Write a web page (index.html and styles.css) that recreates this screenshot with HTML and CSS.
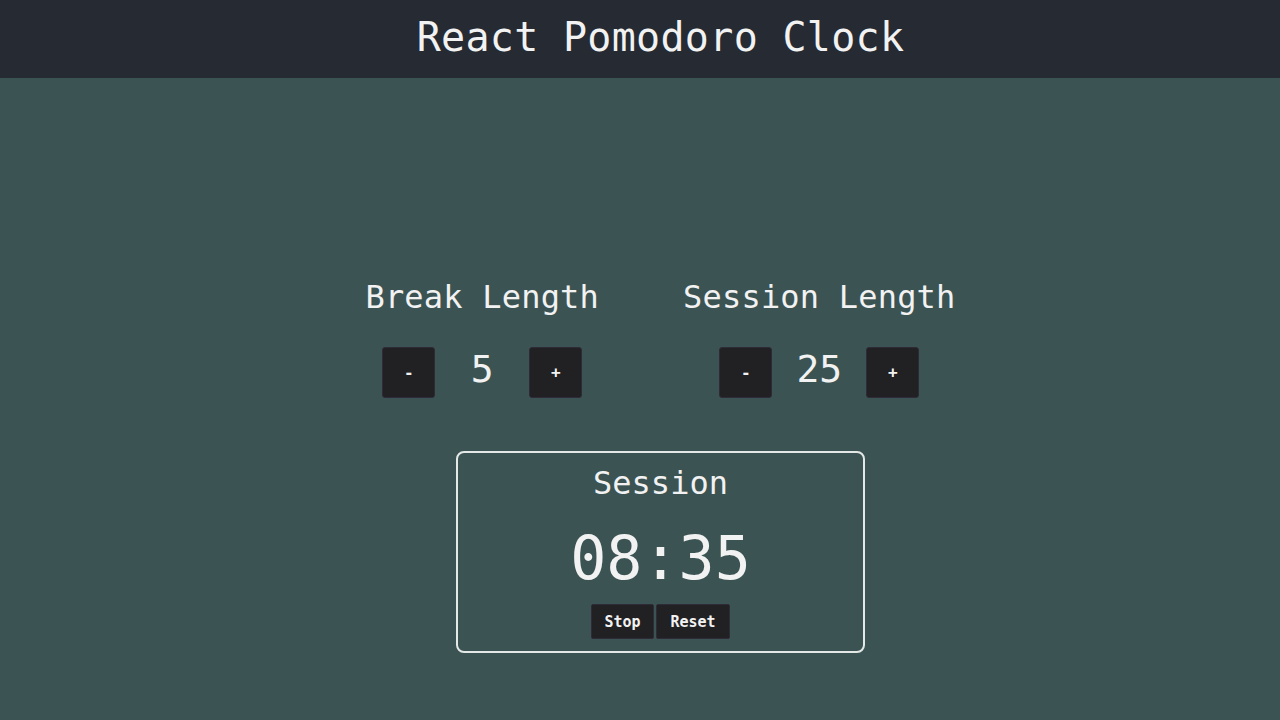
FILE: index.html
```html
<!DOCTYPE html>
<html lang="en">
<head>
<meta charset="utf-8">
<title>React Pomodoro Clock</title>
<link rel="stylesheet" href="styles.css">
</head>
<body>
  <header class="topbar">
    <h1 class="title">React Pomodoro Clock</h1>
  </header>
  <main class="app">
    <section class="settings">
      <div class="setting">
        <h2 class="setting-label">Break Length</h2>
        <div class="controls">
          <button class="ctrl">-</button>
          <span class="value">5</span>
          <button class="ctrl">+</button>
        </div>
      </div>
      <div class="setting">
        <h2 class="setting-label">Session Length</h2>
        <div class="controls">
          <button class="ctrl">-</button>
          <span class="value">25</span>
          <button class="ctrl">+</button>
        </div>
      </div>
    </section>
    <section class="timer">
      <div class="timer-label">Session</div>
      <div class="timer-time">08:35</div>
      <div class="timer-actions">
        <button class="action">Stop</button>
        <button class="action action-wide">Reset</button>
      </div>
    </section>
  </main>
</body>
</html>
```
FILE: styles.css
```css
* { box-sizing: border-box; }
html, body {
  margin: 0;
  height: 100%;
}
body {
  background: #3b5453;
  color: #f2f2f2;
  font-family: "DejaVu Sans Mono", "Liberation Mono", monospace;
}
.topbar {
  height: 78px;
  background: #262a32;
  display: flex;
  align-items: center;
  justify-content: center;
  padding-left: 41px;
  padding-bottom: 4px;
}
.title {
  margin: 0;
  font-size: 40px;
  font-weight: normal;
  line-height: 48px;
  letter-spacing: 0.3px;
}
.app {
  display: flex;
  flex-direction: column;
  align-items: center;
  padding-left: 41px;
  padding-top: 199px;
}
.settings {
  display: flex;
  gap: 84px;
  align-items: flex-start;
}
.setting {
  display: flex;
  flex-direction: column;
  align-items: center;
}
.setting-label {
  margin: 0;
  font-size: 32px;
  font-weight: normal;
  line-height: 40px;
  letter-spacing: 0.2px;
}
.controls {
  margin-top: 30px;
  display: flex;
  align-items: center;
}
.ctrl {
  width: 53px;
  height: 51px;
  background: #212023;
  border: 1px solid #2f2a38;
  border-radius: 3px;
  color: #f2f2f2;
  font-family: "DejaVu Sans Mono", monospace;
  font-size: 16px;
  font-weight: bold;
  padding: 0;
}
.value {
  width: 94px;
  text-align: center;
  font-size: 38px;
  line-height: 44px;
  margin-top: -8px;
}
.timer {
  margin-top: 53px;
  width: 409px;
  height: 202px;
  border: 2px solid #e4e8e6;
  border-radius: 8px;
  display: flex;
  flex-direction: column;
  align-items: center;
  padding-top: 10px;
}
.timer-label {
  font-size: 32px;
  line-height: 40px;
}
.timer-time {
  margin-top: 20px;
  font-size: 60px;
  line-height: 70px;
}
.timer-actions {
  margin-top: 11px;
  display: flex;
  gap: 2px;
}
.action {
  height: 35px;
  width: 63px;
  padding: 0;
  background: #212023;
  border: 1px solid #2f2a38;
  border-radius: 2px;
  color: #f2f2f2;
  font-family: "DejaVu Sans Mono", monospace;
  font-size: 15px;
  font-weight: bold;
}
.action-wide {
  width: 74px;
}
```
